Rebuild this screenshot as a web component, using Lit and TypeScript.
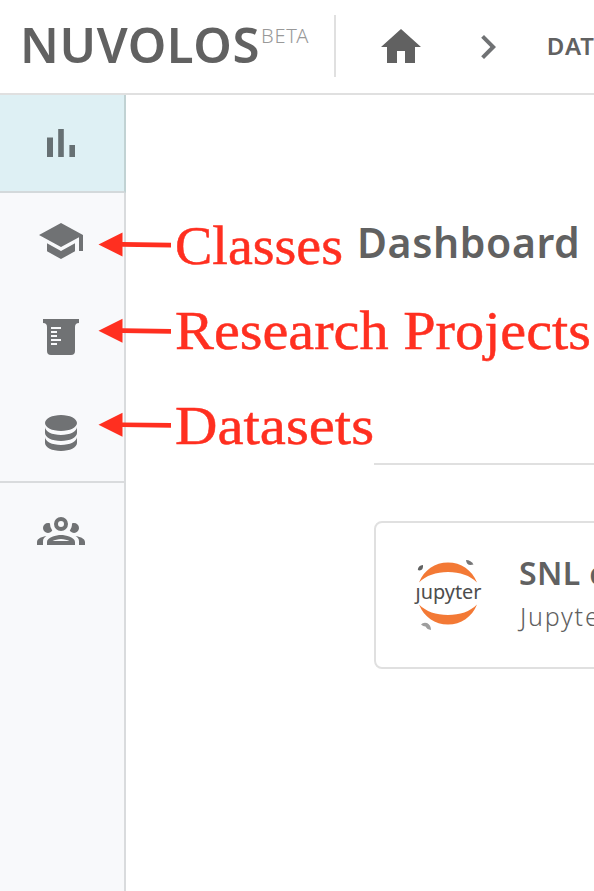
import { LitElement, html, svg, css } from "lit";
import { customElement } from "lit/decorators.js";

const icons = {
  chart: "M5 9.2h3V19H5zM10.6 5h2.8v14h-2.8zm5.6 8H19v6h-2.8z",
  school: "M5 13.18v4L12 21l7-3.82v-4L12 17l-7-3.82zM12 3L1 9l11 6 9-4.91V17h2V9L12 3z",
  beaker: "M3 3h18v2a2 2 0 0 0-2 2v12a2 2 0 0 1-2 2H7a2 2 0 0 1-2-2V7a2 2 0 0 0-2-2V3zM7 7v1h5V7zM7 9v1h3V9zM7 11v1h3v-1zM7 13v1h5v-1zM7 15v1h3v-1z",
  database: "M12 3C7.58 3 4 4.79 4 7s3.58 4 8 4 8-1.79 8-4-3.58-4-8-4M4 9v3c0 2.21 3.58 4 8 4s8-1.79 8-4V9c0 2.21-3.58 4-8 4s-8-1.79-8-4m0 5v3c0 2.21 3.58 4 8 4s8-1.79 8-4v-3c0 2.21-3.58 4-8 4s-8-1.79-8-4",
  group: "M12 5a3.5 3.5 0 0 0-3.5 3.5A3.5 3.5 0 0 0 12 12a3.5 3.5 0 0 0 3.5-3.5A3.5 3.5 0 0 0 12 5m0 2a1.5 1.5 0 0 1 1.5 1.5A1.5 1.5 0 0 1 12 10a1.5 1.5 0 0 1-1.5-1.5A1.5 1.5 0 0 1 12 7M5.5 8A2.5 2.5 0 0 0 3 10.5c0 .94.53 1.75 1.29 2.18.36.2.77.32 1.21.32s.85-.12 1.21-.32c.37-.21.68-.51.91-.87A5.42 5.42 0 0 1 6.5 8.5v-.28c-.3-.14-.64-.22-1-.22m13 0c-.36 0-.7.08-1 .22v.28c0 1.2-.39 2.36-1.12 3.31.12.19.25.34.4.49a2.482 2.482 0 0 0 1.72.7c.44 0 .85-.12 1.21-.32.76-.43 1.29-1.24 1.29-2.18A2.5 2.5 0 0 0 18.5 8M12 14c-2.34 0-7 1.17-7 3.5V19h14v-1.5c0-2.33-4.66-3.5-7-3.5m-7.29.55C2.78 14.78 0 15.76 0 17.5V19h3v-1.93c0-1.01.69-1.85 1.71-2.52m14.58 0c1.02.67 1.71 1.51 1.71 2.52V19h3v-1.5c0-1.74-2.78-2.72-4.71-2.95M12 16c1.53 0 3.24.5 4.23 1H7.77c.99-.5 2.7-1 4.23-1z",
  home: "M10 20v-6h4v6h5v-8h3L12 3 2 12h3v8z",
  chevron: "M10 6L8.59 7.41 13.17 12l-4.58 4.59L10 18l6-6z",
};

const icon = (name: keyof typeof icons) =>
  html`<svg class="icon ${name}" viewBox="0 0 24 24"><path fill-rule=${name === "beaker" ? "evenodd" : "nonzero"} d=${icons[name]} /></svg>`;

const notes = [
  { label: "Classes", y: 244.5, base: 263.5, width: 168 },
  { label: "Research Projects", y: 330.7, base: 348.5, width: 416 },
  { label: "Datasets", y: 424.8, base: 443.5, width: 199 },
];

@customElement("app-root")
export class AppRoot extends LitElement {
  static styles = css`
    :host {
      display: flex;
      flex-direction: column;
      position: relative;
      width: 594px;
      height: 891px;
      overflow: hidden;
      background: #fff;
      color: #616161;
      font-family: "Noto Sans", "Open Sans", sans-serif;
    }
    * { box-sizing: border-box; }
    .icon { display: block; flex: none; width: 48px; height: 48px; fill: #707274; }
    header {
      flex: none;
      display: flex;
      align-items: flex-start;
      height: 95px;
      border-bottom: 2px solid #e0e0e0;
      white-space: nowrap;
    }
    .brand { flex: none; width: 334px; display: flex; padding-left: 20px; }
    .name { width: 241px; font-size: 49px; line-height: 60px; padding-top: 14px; font-weight: 600; letter-spacing: 0.6px; }
    .beta { font-size: 20px; line-height: 28px; padding-top: 22px; font-weight: 300; letter-spacing: 0.8px; color: #999; }
    .rule { flex: none; width: 2px; height: 62px; margin-top: 15px; background: #e0e0e0; }
    .home { fill: #616161; margin: 23px 0 0 41px; }
    .chevron { margin: 23px 0 0 39.3px; }
    .crumb { margin-left: 34.5px; padding-top: 29px; font-size: 24px; line-height: 33px; font-weight: 600; letter-spacing: 1px; }
    .body { flex: 1; display: flex; min-height: 0; }
    nav { flex: none; width: 126px; background: #f8f9fb; border-right: 2px solid #d9dbdd; }
    .item { display: flex; height: 96px; align-items: center; justify-content: center; padding-right: 2px; }
    .active { height: 98px; background: #def0f4; border-bottom: 2px solid #d3d9db; margin-right: -2px; border-right: 2px solid #c1d2d3; }
    .active .icon { fill: #667073; }
    .last { height: 98px; border-top: 2px solid #d9dbdd; }
    main { flex: 1; min-width: 0; }
    h1 { margin: 0; padding: 118px 0 0 231px; height: 368px; font-size: 41px; line-height: 58px; font-weight: 600; letter-spacing: 0.6px; white-space: nowrap; }
    .line { height: 2px; margin-left: 248px; background: #e0e0e0; }
    .card {
      display: flex;
      width: 420px;
      height: 148px;
      margin: 56px 0 0 248px;
      border: 2px solid #e0e0e0;
      border-radius: 8px;
      white-space: nowrap;
    }
    .logo { flex: none; width: 72px; height: 76px; margin: 34px 0 0 36px; }
    .wordmark { font: 400 20px "Noto Sans", sans-serif; fill: #4d4d4d; }
    .text { margin-left: 35px; padding-top: 28px; }
    .title { font-size: 32px; line-height: 44px; font-weight: 600; letter-spacing: 0.4px; }
    .sub { margin-left: 1px; font-size: 25px; line-height: 42px; font-weight: 300; letter-spacing: 1.8px; color: #606060; }
    .notes { position: absolute; left: 0; top: 0; width: 594px; height: 891px; fill: #ff2f20; }
    .note { font: 55px "Liberation Serif", serif; stroke: #ff2f20; stroke-width: 0.5px; }
  `;

  render() {
    return html`
      <header>
        <div class="brand"><span class="name">NUVOLOS</span><span class="beta">BETA</span></div>
        <div class="rule"></div>
        ${icon("home")}${icon("chevron")}
        <span class="crumb">DAT</span>
      </header>
      <div class="body">
        <nav>
          <div class="item active">${icon("chart")}</div>
          <div class="item">${icon("school")}</div>
          <div class="item">${icon("beaker")}</div>
          <div class="item">${icon("database")}</div>
          <div class="item last">${icon("group")}</div>
        </nav>
        <main>
          <h1>Dashboard</h1>
          <div class="line"></div>
          <section class="card">
            <svg class="logo" viewBox="412 557 72 76">
              <path fill="#f37935" d="M419 582.5C424 570 435 562.5 448 562.5S472 570 477 582.5C470 575.500 460 572 448 572S426 575.500 419 582.500zM419 604.500C424 617 435 624.500 448 624.500S472 617 477 604.500C470 611.500 460 615 448 615S426 611.500 419 604.500z" />
              <path fill="#616262" d="M417.800 570Q418 565.500 423 565Q423.600 570 419.500 570.500z" />
              <path fill="#767677" d="M466 560Q471 560 473.500 564.500Q466.500 566.500 466 560z" />
              <path fill="#9e9e9e" d="M421 624.500Q423 622 427 623Q431 625 431 630Q427 629.500 425.500 626.500Q423 626.500 421 624.500z" />
              <text class="wordmark" x="415.500" y="599" textLength="66" lengthAdjust="spacingAndGlyphs">ȷupyter</text>
            </svg>
            <div class="text">
              <div class="title">SNL c</div>
              <div class="sub">Jupyte</div>
            </div>
          </section>
        </main>
      </div>
      <svg class="notes" viewBox="0 0 594 891">
        ${notes.map((n) => svg`
          <path d="M98.500 ${n.y}L122.500 ${n.y - 12}V${n.y - 2.4}L171 ${n.y - 1.7}V${n.y + 3}L122.500 ${n.y + 2.300}V${n.y + 12}z" />
          <text class="note" x="175" y=${n.base} textLength=${n.width} lengthAdjust="spacingAndGlyphs">${n.label}</text>`)}
      </svg>
    `;
  }
}
